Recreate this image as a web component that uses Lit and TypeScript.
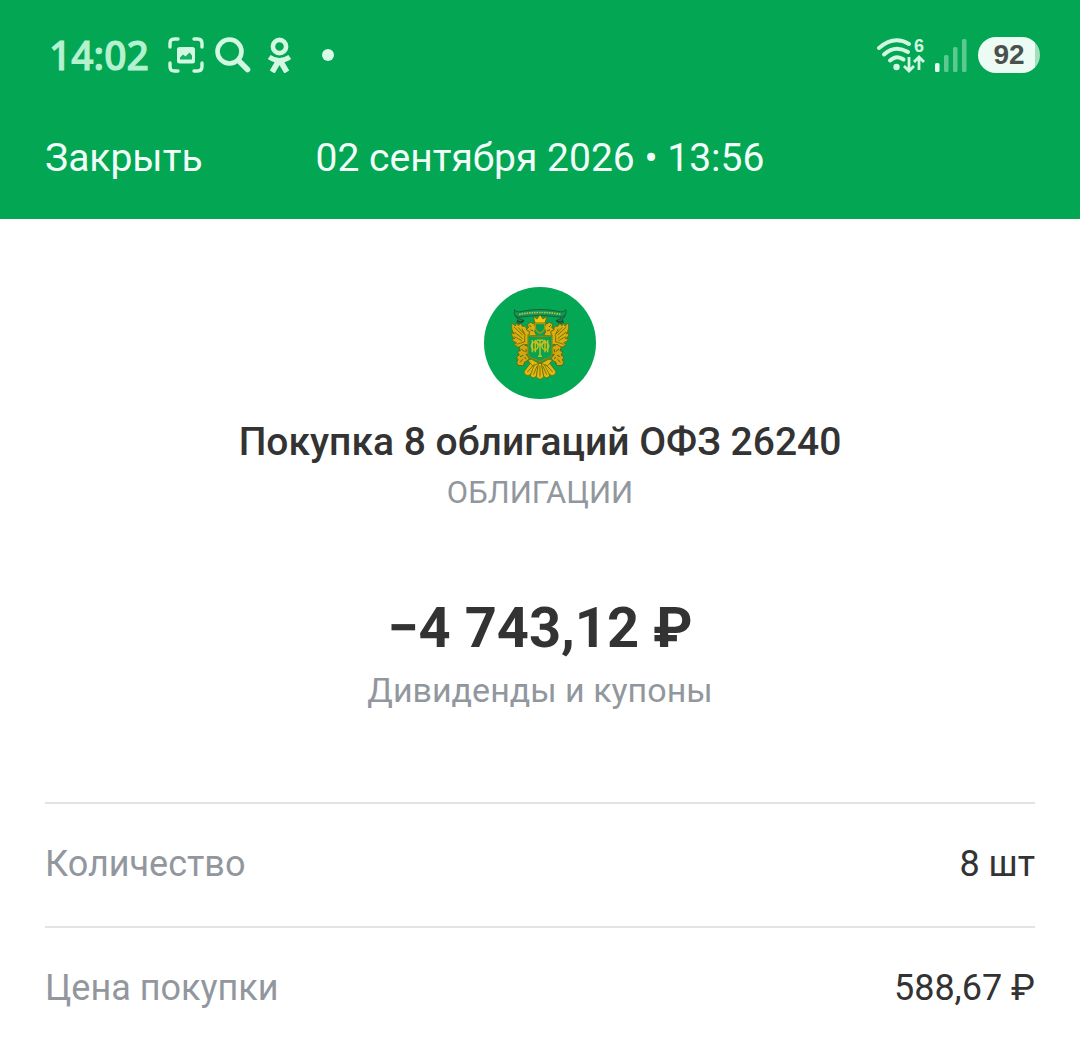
import { LitElement, html, svg, css } from "lit";
import { customElement, property } from "lit/decorators.js";

interface Detail {
  label: string;
  value: string;
}

@customElement("status-bar")
class StatusBar extends LitElement {
  static styles = css`
    :host {
      display: flex;
      align-items: center;
      height: 110px;
      padding: 0 40px 0 49px;
      color: #d2f8e2;
    }
    .clock {
      font: 500 39px/48px "Noto Sans", sans-serif;
      color: #b4f2cf;
      -webkit-text-stroke: 1px #b4f2cf;
      margin-right: 19px;
    }
    .notices,
    .signals {
      display: flex;
      align-items: center;
    }
    .notices {
      gap: 11px;
      flex: 1;
    }
    svg {
      display: block;
    }
    .dot {
      width: 12px;
      height: 12px;
      border-radius: 50%;
      background: #d8fae7;
      margin-left: 13px;
    }
    .signals {
      gap: 9px;
    }
    .net {
      font: 700 18px "Liberation Sans", sans-serif;
    }
    .battery {
      width: 62px;
      height: 36px;
      border-radius: 18px;
      background: linear-gradient(90deg, #ecfbf3 92%, #a3dfbd 92%);
      color: #4a514d;
      font: 700 28px/36px "Liberation Sans", sans-serif;
      text-align: center;
      margin-left: 2px;
    }
  `;

  render() {
    return html`
      <time class="clock">14:02</time>
      <div class="notices">
        <svg width="36" height="36" viewBox="0 0 36 36" fill="none" aria-hidden="true">
          <path
            d="M2 10V6.500Q2 2 6.500 2H10M26 2H29.500Q34 2 34 6.500V10M34 26V29.500Q34 34 29.500 34H26M10 34H6.500Q2 34 2 29.500V26"
            stroke="currentColor" stroke-width="3.400" stroke-linecap="round" />
          <rect x="9" y="10" width="18" height="16.500" rx="2.500" fill="currentColor" />
          <path d="M12 22.500V20.500L15 17.500L17.500 19.500L21.500 15.500L24 18.500V22.500Z" fill="#16b064" />
        </svg>
        <svg width="36" height="36" viewBox="0 0 36 36" fill="none" stroke="currentColor" aria-hidden="true">
          <circle cx="14.500" cy="14.500" r="12" stroke-width="4.600" />
          <path d="M23.500 23.500L32.500 32.500" stroke-width="5.600" stroke-linecap="round" />
        </svg>
        <svg width="36" height="36" viewBox="0 0 36 36" fill="none" stroke="currentColor" aria-hidden="true">
          <circle cx="17.500" cy="9.500" r="6.600" stroke-width="4.600" />
          <path d="M7.200 20Q17.500 27 27.800 20" stroke-width="5" />
          <path d="M17.500 22.500L10.200 35M17.500 22.500L24.800 35" stroke-width="5.600" />
        </svg>
        <span class="dot"></span>
      </div>
      <div class="signals">
        <svg class="net" width="50" height="36" viewBox="0 0 50 36" fill="none" aria-hidden="true">
          <g stroke="currentColor" stroke-width="4" stroke-linecap="round">
            <path d="M3 11Q18 -2 33 7" />
            <path d="M8 17.500Q19 7.500 32 15" />
            <path d="M14 23.500Q20.500 17.500 27.500 22.500" />
          </g>
          <circle cx="20.500" cy="30" r="3.200" fill="currentColor" />
          <text x="38" y="15" fill="currentColor">6</text>
          <g stroke="currentColor" stroke-width="2.800">
            <path d="M33 20V34M28 29L33 34L38 29M43 33V20M38 25L43 20L48 25" />
          </g>
        </svg>
        <svg width="32" height="36" viewBox="0 0 32 36" aria-hidden="true">
          <rect x="0" y="26" width="4.500" height="9" rx="1.500" fill="#e4fcef" />
          <g fill="#5cca90">
            <rect x="9" y="18" width="4.500" height="17" rx="1.500" />
            <rect x="18" y="10" width="4.500" height="25" rx="1.500" />
            <rect x="27" y="2" width="4.500" height="33" rx="1.500" />
          </g>
        </svg>
        <span class="battery">92</span>
      </div>
    `;
  }
}

@customElement("bond-emblem")
class BondEmblem extends LitElement {
  static styles = css`
    :host {
      display: block;
    }
    .emblem {
      display: block;
      width: 112px;
      height: 112px;
    }
  `;

  private wing() {
    return svg`
      <path d="M96 120L106 129L108 121L116 128L121 120L127 130L136 130L142 142L154 146V186L136 184L128 192Q112 196 102 184
        L110 179Q98 177 96 167L105 167Q93 160 94 149L103 153Q92 140 96 120Z"
        fill="#d8b010" stroke="#6a6a0c" stroke-width="2.500" stroke-linejoin="round" />
      <path d="M102 132L128 156M103 147L128 167M103 161L126 173M110 184L134 176M114 133L134 154M126 137L136 158M134 158V178"
        stroke="#7d700c" stroke-width="3" fill="none" />
      <path d="M146 158L149 146L138 139L146 134L142 125L152 118L164 124L168 134L164 146L170 158Z"
        fill="#d9b112" stroke="#5b620f" stroke-width="2.500" />
      <path d="M148 126L154 132M151 140L160 144" stroke="#5d5d12" stroke-width="3" />
      <path d="M117 192L130 184L146 192V214L138 214L148 226L141 234L133 238L131 248L114 247L110 239
        L114 230L109 222L118 216L112 206L121 203Z"
        fill="#cfa812" stroke="#5c620f" stroke-width="2.500" stroke-linejoin="round" />
      <path d="M124 198L134 206M138 198V208M120 221L130 217M134 222L138 228M120 238L128 229" stroke="#6a6009" stroke-width="3" />
      <path d="M105 93Q111 98 122 95L119 108L132 112Q126 126 110 119L115 108Q106 106 105 93Z"
        fill="#168b50" stroke="#16603a" stroke-width="3" />
      <path d="M112 112Q119 121 132 113" stroke="#22452c" stroke-width="4" fill="none" />
    `;
  }

  render() {
    return html`
      <svg class="emblem" viewBox="12 12 336 336" role="img" aria-label="ОФЗ" fill="none">
        <circle cx="180" cy="180" r="168" fill="#04a854" />
        <g>${this.wing()}</g>
        <g transform="translate(361 0) scale(-1 1)">${this.wing()}</g>
        <path d="M104 80Q111 90 126 85Q180 74 235 85Q250 90 257 80Q262 94 248 101Q239 105 229 101Q180 93 132 101Q113 106 106 99Q101 92 104 80Z"
          fill="#159452" stroke="#17562f" stroke-width="2.500" />
        <path d="M117 94Q180 83 244 94" stroke="#a8c455" stroke-width="5" stroke-dasharray="5 2.500" />
        <path d="M165 120L160 100L171 108L180 95L189 108L201 100L195 120Z" fill="#f1c50c" stroke="#62670d" stroke-width="2.500" />
        <path d="M166 122H194V136Q191 146 180 150Q169 146 166 136Z" fill="#079e50" stroke="#a8950d" stroke-width="4" />
        <g stroke="#5d640f" stroke-width="2" fill="#e0b810" stroke-linejoin="round">
          <path d="M158 232L132 266Q136 283 151 275L168 244Z" />
          <path d="M166 238L151 277Q158 291 169 279L176 241Z" />
          <path d="M176 238L169 281Q180 296 191 281L184 238Z" />
          <path d="M194 238L209 277Q202 291 191 279L184 241Z" />
          <path d="M202 232L228 266Q224 283 209 275L192 244Z" />
          <path d="M144 232Q155 224 164 234L180 242L196 234Q207 224 217 232L202 249L180 239L158 249Z" />
        </g>
        <path d="M142 267L163 244M160 275L172 248M180 281V248M200 275L188 248M218 267L197 244" stroke="#7c720b" stroke-width="3" />
        <path d="M144 157Q180 164 216 157V214Q213 224 195 228L180 236L165 228Q147 224 144 214Z"
          fill="#06a452" stroke="#8b860f" stroke-width="4" />
        <g stroke="#c9bd1e" stroke-width="4.500">
          <path d="M157 171V208M203 171V208M166 171L180 190L195 171M166 171V208M195 171V208M180 171V221M171 172H190M174 220H186" />
          <ellipse cx="164" cy="189" rx="10" ry="11" />
          <ellipse cx="196" cy="189" rx="10" ry="11" />
        </g>
      </svg>
    `;
  }
}

@customElement("detail-list")
class DetailList extends LitElement {
  @property({ attribute: false }) items: Detail[] = [];

  static styles = css`
    :host {
      display: block;
    }
    .list {
      margin: 0;
    }
    .row {
      display: flex;
      justify-content: space-between;
      align-items: center;
      padding: 38px 0 40px;
      border-top: 2px solid #e2e3e4;
      font-size: 36px;
      line-height: 44px;
    }
    .label {
      color: #92979e;
    }
    .value {
      margin: 0;
      color: #333;
    }
  `;

  render() {
    return html`
      <dl class="list">
        ${this.items.map(
          (item) => html`
            <div class="row">
              <dt class="label">${item.label}</dt>
              <dd class="value">${item.value}</dd>
            </div>
          `
        )}
      </dl>
    `;
  }
}

@customElement("app-root")
class AppRoot extends LitElement {
  private details: Detail[] = [
    { label: "Количество", value: "8 шт" },
    { label: "Цена покупки", value: "588,67 ₽" },
  ];

  static styles = css`
    :host {
      display: block;
      background: #fff;
      color: #333;
      font-family: Roboto, sans-serif;
    }
    .header {
      background: #02a653;
    }
    .nav {
      display: grid;
      grid-template-columns: 1fr auto 1fr;
      align-items: center;
      padding: 24px 45px 37px;
      color: #f1fff8;
      font-size: 39px;
      line-height: 48px;
    }
    .close {
      justify-self: start;
      border: 0;
      padding: 0;
      background: none;
      color: inherit;
      font: inherit;
      cursor: pointer;
    }
    .summary {
      display: flex;
      flex-direction: column;
      align-items: center;
      padding: 68px 45px 90px;
      text-align: center;
    }
    .title {
      margin: 19px 0 5px;
      font-size: 39px;
      line-height: 48px;
      font-weight: 500;
    }
    .kind,
    .account {
      margin: 0;
      color: #92979e;
    }
    .kind {
      font-size: 31px;
      line-height: 44px;
    }
    .amount {
      margin: 81px 0 8px;
      font-size: 56px;
      line-height: 64px;
      font-weight: 700;
    }
    .account {
      font-size: 34px;
      line-height: 44px;
    }
    .details {
      margin: 0 45px;
    }
  `;

  render() {
    return html`
      <header class="header">
        <status-bar></status-bar>
        <div class="nav">
          <button class="close" type="button">Закрыть</button>
          <time class="date">02 сентября 2026 • 13:56</time>
        </div>
      </header>
      <main>
        <section class="summary">
          <bond-emblem></bond-emblem>
          <h1 class="title">Покупка 8 облигаций ОФЗ 26240</h1>
          <p class="kind">ОБЛИГАЦИИ</p>
          <p class="amount">−4 743,12 ₽</p>
          <p class="account">Дивиденды и купоны</p>
        </section>
        <detail-list class="details" .items=${this.details}></detail-list>
      </main>
    `;
  }
}
